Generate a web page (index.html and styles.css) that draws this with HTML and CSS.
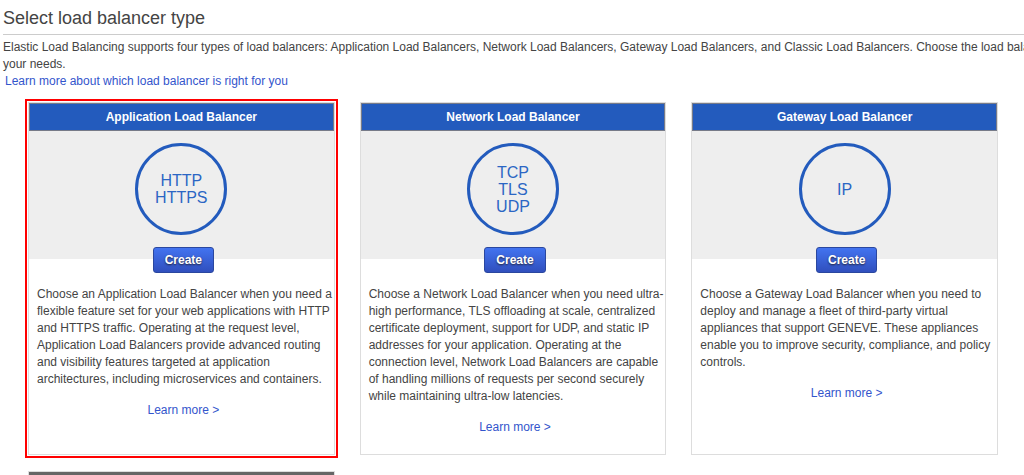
FILE: index.html
```html
<!DOCTYPE html>
<html lang="en">
<head>
<meta charset="utf-8">
<title>Select load balancer type</title>
<link rel="stylesheet" href="styles.css">
</head>
<body>
<main class="page">
  <h1 class="title">Select load balancer type</h1>
  <p class="intro">Elastic Load Balancing supports four types of load balancers: Application Load Balancers, Network Load Balancers, Gateway Load Balancers, and Classic Load Balancers. Choose the load balancer t<br>your needs.</p>
  <a class="guide" href="#">Learn more about which load balancer is right for you</a>
  <div class="cards">
    <section class="card selected">
      <h2 class="card-title">Application Load Balancer</h2>
      <div class="banner"><div class="protocols">HTTP<br>HTTPS</div></div>
      <button class="create" type="button">Create</button>
      <p class="description">Choose an Application Load Balancer when you need a<br>flexible feature set for your web applications with HTTP<br>and HTTPS traffic. Operating at the request level,<br>Application Load Balancers provide advanced routing<br>and visibility features targeted at application<br>architectures, including microservices and containers.</p>
      <a class="more" href="#">Learn more &gt;</a>
    </section>
    <section class="card">
      <h2 class="card-title">Network Load Balancer</h2>
      <div class="banner"><div class="protocols">TCP<br>TLS<br>UDP</div></div>
      <button class="create" type="button">Create</button>
      <p class="description">Choose a Network Load Balancer when you need ultra-<br>high performance, TLS offloading at scale, centralized<br>certificate deployment, support for UDP, and static IP<br>addresses for your application. Operating at the<br>connection level, Network Load Balancers are capable<br>of handling millions of requests per second securely<br>while maintaining ultra-low latencies.</p>
      <a class="more" href="#">Learn more &gt;</a>
    </section>
    <section class="card">
      <h2 class="card-title">Gateway Load Balancer</h2>
      <div class="banner"><div class="protocols">IP</div></div>
      <button class="create" type="button">Create</button>
      <p class="description">Choose a Gateway Load Balancer when you need to<br>deploy and manage a fleet of third-party virtual<br>appliances that support GENEVE. These appliances<br>enable you to improve security, compliance, and policy<br>controls.</p>
      <a class="more" href="#">Learn more &gt;</a>
    </section>
    <section class="card">
      <div class="card-title previous"></div>
    </section>
  </div>
</main>
</body>
</html>
```
FILE: styles.css
```css
* {
  box-sizing: border-box;
}

body {
  margin: 0;
  background: #fff;
  color: #444;
  font: 12px/17px "Liberation Sans", Arial, sans-serif;
}

.page {
  height: 100vh;
  overflow: hidden;
  padding-left: 3px;
}

.title {
  margin: 0 0 4px;
  padding: 6px 0 3px;
  border-bottom: 1px solid #ccc;
  font-size: 18px;
  font-weight: 400;
  line-height: 25px;
}

/* The introduction runs up to the right edge of the panel. */
.intro {
  margin: 0;
  white-space: nowrap;
}

a {
  color: #3355cc;
  text-decoration: none;
}

.guide {
  display: block;
  padding-left: 2px;
}

.cards {
  display: grid;
  grid-template-columns: repeat(3, 1fr);
  gap: 16px 25px;
  padding: 12px 26px 0 25px;
}

.card {
  display: flex;
  flex-direction: column;
  align-items: center;
  border: 1px solid #ddd;
}

.selected {
  outline: 2px solid #f00;
  outline-offset: 1px;
}

.card-title {
  align-self: stretch;
  margin: 0;
  padding: 5px;
  border: 1px solid #777b88;
  background: #235bbd;
  color: #fff;
  font-size: 12px;
  line-height: 16px;
  text-align: center;
}

.previous {
  min-height: 28px;
  border-color: #666;
  background: #666;
}

.banner {
  display: flex;
  align-self: stretch;
  justify-content: center;
  padding: 12px 0 24px;
  background: #eee;
}

.protocols {
  display: flex;
  align-items: center;
  justify-content: center;
  width: 92px;
  height: 92px;
  border: 3px solid #235bbd;
  border-radius: 50%;
  color: #2b66c4;
  font-size: 16px;
  line-height: 17px;
  text-align: center;
}

.create {
  margin: -12px 0 13px 4px;
  padding: 4px 11px;
  border: 1px solid #2a479f;
  border-radius: 3px;
  background: linear-gradient(#4273f0, #304fbd);
  color: #fff;
  font: bold 12px/16px "Liberation Sans", Arial, sans-serif;
  text-shadow: 0 1px 2px #223;
}

.description {
  align-self: stretch;
  margin: 0 0 14px 8px;
  white-space: nowrap;
}

.more {
  margin: 0 0 18px 4px;
}
```
